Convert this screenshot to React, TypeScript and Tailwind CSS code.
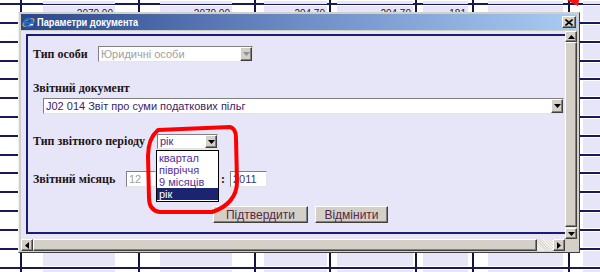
import React from "react";

type Col = { w: string; box: string };

const COLS: Col[] = [
  { w: "w-[20px]", box: "" },
  { w: "w-[118px]", box: "ml-[21px] w-[72px]" },
  { w: "w-[116px]", box: "ml-[20px] w-[72px]" },
  { w: "w-[75px]", box: "ml-[8px] w-[63px]" },
  { w: "w-[86px]", box: "ml-[6px] w-[76px]" },
  { w: "w-[57px]", box: "ml-[6px] w-[45px]" },
  { w: "w-[96px]", box: "ml-[14px] w-[75px]" },
  { w: "flex-1", box: "ml-[13px] flex-1" },
];

const ROWS = [
  "h-[5px]",
  "h-[19px]",
  "h-[19px]",
  "h-[19px]",
  "h-[18px]",
  "h-[19px]",
  "h-[19px]",
  "h-[19px]",
  "h-[19px]",
  "h-[18px]",
  "h-[19px]",
  "h-[19px]",
  "h-[19px]",
  "h-[19px]",
  "h-[19px]",
  "h-[19px]",
];

const NUMS = ["", "2070.00", "2070.00", "204.70", "204.70", "181", "", ""];

const RAISED =
  "bg-[#d4d0c8] border border-t-white border-l-white border-r-[#404040] border-b-[#404040] shadow-[inset_-1px_-1px_0_#808080]";

function Tri({ dir, color = "#000" }: { dir: "up" | "down" | "left" | "right"; color?: string }) {
  const pts =
    dir === "down"
      ? "0,0 7,0 3.5,4"
      : dir === "up"
      ? "0,4 7,4 3.5,0"
      : dir === "left"
      ? "4,0 4,7 0,3.5"
      : "0,0 0,7 4,3.5";
  const w = dir === "up" || dir === "down" ? 7 : 4;
  const h = dir === "up" || dir === "down" ? 4 : 7;
  return (
    <svg width={w} height={h} viewBox={`0 0 ${w} ${h}`}>
      <polygon points={pts} fill={color} />
    </svg>
  );
}

function DropBtn({ disabled }: { disabled?: boolean }) {
  return (
    <div className={`w-[12px] h-full flex items-center justify-center ${RAISED}`}>
      <Tri dir="down" color={disabled ? "#909090" : "#000"} />
    </div>
  );
}

function IEIcon() {
  return (
    <svg width="13" height="13" viewBox="0 0 13 13">
      <ellipse cx="6.5" cy="6.5" rx="6" ry="3" transform="rotate(-30 6.5 6.5)" fill="none" stroke="#e8b020" strokeWidth="1.3" />
      <circle cx="6.5" cy="6.8" r="4" fill="none" stroke="#1d6fd6" strokeWidth="2" />
      <rect x="3" y="6.2" width="7" height="1.6" fill="#1d6fd6" />
      <rect x="8.2" y="7.9" width="3" height="1.6" fill="#e6ecf8" />
    </svg>
  );
}

function Background() {
  return (
    <div className="flex flex-col w-[600px] h-[272px] overflow-hidden bg-white">
      {ROWS.map((h, r) => (
        <div key={r} className={`${h} shrink-0 flex border-b-2 border-[#1a1a5a]`}>
          {COLS.map((c, i) => (
            <div
              key={i}
              className={`${c.w} h-full flex ${i > 0 ? "border-l-2 border-[#14143c]" : ""}`}
            >
              {c.box && (
                <div className={`${c.box} h-full py-px`}>
                  <div className="h-full bg-[#e6e6f8] flex justify-end items-start pt-[3px] pr-[2px] text-[10px] leading-none text-[#202020]">
                    {r === 1 ? NUMS[i] : ""}
                  </div>
                </div>
              )}
            </div>
          ))}
        </div>
      ))}
    </div>
  );
}

function Select({
  text,
  w,
  disabled,
  color,
}: {
  text: string;
  w: string;
  disabled?: boolean;
  color: string;
}) {
  return (
    <div
      className={`${w} h-full bg-white border border-t-[#808080] border-l-[#808080] border-r-[#e4e4e4] border-b-[#e4e4e4] flex items-center`}
    >
      <span className={`flex-1 pl-[2px] text-[11px] leading-none whitespace-nowrap overflow-hidden ${color}`}>
        {text}
      </span>
      <DropBtn disabled={disabled} />
    </div>
  );
}

const LABEL = "font-['Liberation_Serif',serif] font-bold text-[12px] leading-[15px] text-[#1c1414] whitespace-nowrap";

function Dialog() {
  return (
    <div className="absolute left-[18px] top-[12px] w-[562px] h-[241px] bg-[#d4d0c8] border border-t-[#d4d0c8] border-l-[#f0f0f0] border-r-[#404040] border-b-[#404040] px-[2px] pt-[1px] pb-[1px] flex flex-col">
      <div className="h-[16px] shrink-0 flex items-center bg-linear-to-r from-[#2b478b] via-[#6d8dc6] to-[#a8ccf2] pl-[1px] pr-[1px]">
        <IEIcon />
        <span className="ml-[2px] inline-block origin-left scale-x-[0.84] text-white font-bold text-[11px] leading-none whitespace-nowrap">
          Параметри документа
        </span>
        <div className={`ml-auto w-[14px] h-[12px] flex items-center justify-center ${RAISED}`}>
          <svg width="8" height="7" viewBox="0 0 8 7">
            <path d="M0.5 0.5 L7.5 6.5 M7.5 0.5 L0.5 6.5" stroke="#000" strokeWidth="1.6" />
          </svg>
        </div>
      </div>
      <div className="mt-[1px] flex-1 grid grid-cols-[1fr_12px] grid-rows-[1fr_12px] min-h-0">
        {/* scroll view */}
        <div className="relative overflow-hidden bg-[#e6e6f8] pl-[5px] pt-[3px]">
          <div className="w-[560px] h-[200px] border-2 border-[#1c1c70] pl-[5px] flex flex-col">
            <div className="mt-[10px] h-[16px] flex items-center">
              <div className={`w-[65px] ${LABEL}`}>Тип особи</div>
              <Select text="Юридичні особи" w="w-[155px]" disabled color="text-[#a0a0a0]" />
            </div>
            <div className={`mt-[19px] h-[15px] ${LABEL}`}>Звітний документ</div>
            <div className="mt-[2px] ml-[10px] h-[16px] flex">
              <Select
                text="J02 014 Звіт про суми податкових пільг"
                w="w-[521px]"
                color="text-[#3c2468]"
              />
            </div>
            <div className="mt-[20px] h-[15px] flex items-center">
              <div className={`w-[124px] ${LABEL}`}>Тип звітного періоду</div>
              <div className="relative h-full">
                <Select text="рік" w="w-[61px]" color="text-[#4a2c86]" />
                <div className="absolute left-[-1px] top-[16px] w-[63px] bg-white border border-black flex flex-col py-px z-10">
                  {["квартал", "півріччя", "9 місяців", "рік"].map((t, i) => (
                    <div
                      key={t}
                      className={`h-[12px] pl-[2px] text-[11px] leading-[12px] whitespace-nowrap ${
                        i === 3 ? "bg-[#1a2470] text-white" : "text-[#51309a]"
                      }`}
                    >
                      {t}
                    </div>
                  ))}
                </div>
              </div>
            </div>
            <div className="mt-[22px] h-[16px] flex items-center">
              <div className={`w-[93px] ${LABEL}`}>Звітний місяць</div>
              <div className="w-[30px] h-full bg-white border border-t-[#808080] border-l-[#808080] border-r-[#e4e4e4] border-b-[#e4e4e4] pl-[2px] text-[11px] leading-[14px] text-[#a0a0a0]">
                12
              </div>
              <div className={`w-[63px] overflow-hidden text-right ${LABEL}`}>Звітний рік</div>
              <div className={`w-[8px] text-center ${LABEL}`}>:</div>
              <div className="ml-[3px] w-[37px] h-full bg-white border border-t-[#808080] border-l-[#808080] border-r-[#e4e4e4] border-b-[#e4e4e4] pl-[2px] text-[11px] leading-[14px] text-[#34347e]">
                2011
              </div>
            </div>
            <div className="mt-[19px] h-[17px] flex">
              <div className={`ml-[180px] w-[95px] h-full flex items-center justify-center text-[12px] leading-none text-[#552848] ${RAISED}`}>
                Підтвердити
              </div>
              <div className={`ml-[7px] w-[73px] h-full flex items-center justify-center text-[12px] leading-none text-[#552848] ${RAISED}`}>
                Відмінити
              </div>
            </div>
          </div>
        </div>
        {/* vertical scrollbar */}
        <div className="flex flex-col bg-[#ebe9e4]">
          <div className={`h-[11px] shrink-0 flex items-center justify-center ${RAISED}`}>
            <Tri dir="up" />
          </div>
          <div className={`flex-1 ${RAISED}`} />
          <div className="h-[1px] shrink-0" />
          <div className={`h-[11px] shrink-0 flex items-center justify-center ${RAISED}`}>
            <Tri dir="down" />
          </div>
        </div>
        {/* horizontal scrollbar */}
        <div className="flex bg-[#ebe9e4]">
          <div className={`w-[12px] shrink-0 flex items-center justify-center ${RAISED}`}>
            <Tri dir="left" />
          </div>
          <div className={`flex-1 ${RAISED}`} />
          <div className="w-[16px] shrink-0 bg-[repeating-linear-gradient(45deg,#f4f3f0_0px,#f4f3f0_1px,#dcd9d2_1px,#dcd9d2_2px)]" />
          <div className={`w-[12px] shrink-0 flex items-center justify-center ${RAISED}`}>
            <Tri dir="right" />
          </div>
        </div>
        <div className="bg-[#d4d0c8]" />
      </div>
    </div>
  );
}

export default function App() {
  return (
    <div className="relative w-[600px] h-[272px] overflow-hidden font-['Liberation_Sans',Arial,sans-serif]">
      <Background />
      <Dialog />
      <svg
        className="absolute left-0 top-0 pointer-events-none"
        width="600"
        height="272"
        viewBox="0 0 600 272"
      >
        <polygon points="567,0 579,0 578,6 572,3" fill="#ff1010" />
        <path
          d="M148,156 C148,146 151,136 158,130 L230,127 C234,128 236,132 236,138 L237,182 C237,196 228,207 212,212 L160,212 C152,211 149,206 149,198 L148,156"
          fill="none"
          stroke="#ff0000"
          strokeWidth="4"
          strokeLinecap="round"
          strokeLinejoin="round"
        />
      </svg>
    </div>
  );
}
